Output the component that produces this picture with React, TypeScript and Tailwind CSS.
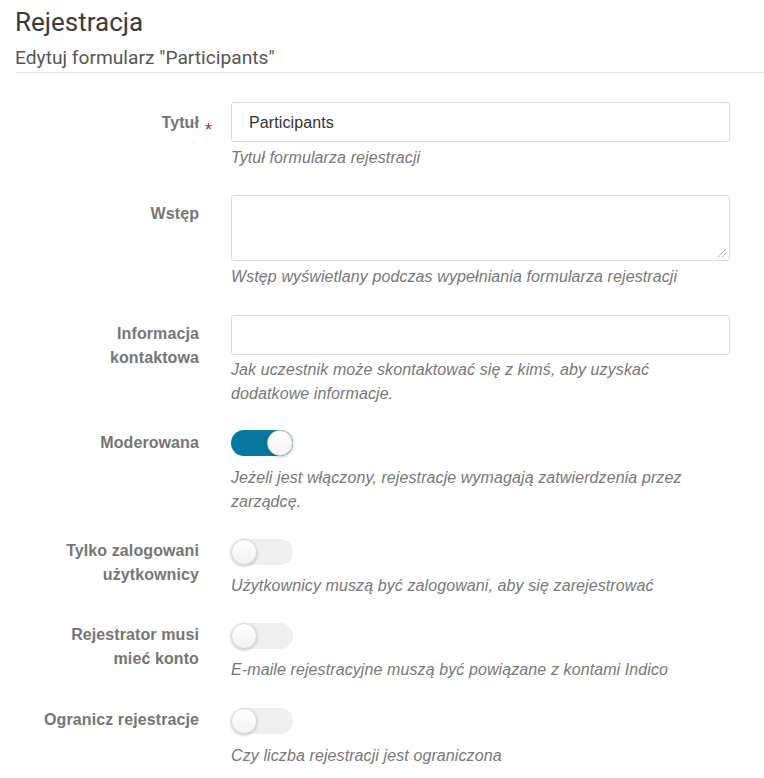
import React from "react";

const sans = { fontFamily: '"Liberation Sans", Arial, sans-serif' };

function Toggle({ on }: { on: boolean }) {
  return (
    <div
      className={
        "relative h-[26px] w-[62px] rounded-full " +
        (on ? "bg-[#07789f]" : "bg-[#efefef]")
      }
    >
      <div
        className={
          "absolute top-0 h-[26px] w-[26px] rounded-full border border-[#d6d6d6] bg-gradient-to-b from-white to-[#f2f2f2] shadow-[0_1px_3px_rgba(0,0,0,0.25)] " +
          (on ? "right-0" : "left-0")
        }
      />
    </div>
  );
}

function Label({ children, pt, star }: { children: React.ReactNode; pt: string; star?: boolean }) {
  return (
    <div className={"w-[199px] shrink-0 text-right text-[16px] font-bold leading-[24px] tracking-[0.1px] text-[#757575] " + pt}>
      <span className="relative">
        {children}
        {star && (
          <span className="absolute left-[calc(100%+6px)] top-[4px] text-[18px] font-normal text-[#b0262b]">*</span>
        )}
      </span>
    </div>
  );
}

function Help({ children, mt }: { children: React.ReactNode; mt: string }) {
  return <div className={"text-[16px] italic leading-[24px] tracking-[0.1px] text-[#777] " + mt}>{children}</div>;
}

export default function App() {
  return (
    <div className="min-h-[778px] bg-white" style={sans}>
      <div className="ml-[15px] border-b border-[#e5e5e5] pb-[2px]">
        <h1
          className="pt-[7px] text-[26px] leading-[30px] text-[#3a3a3a]"
          style={{ fontFamily: 'Roboto, "Liberation Sans", sans-serif' }}
        >
          Rejestracja
        </h1>
        <h2
          className="mt-[9px] text-[19.2px] leading-[24px] text-[#555]"
          style={{ fontFamily: 'Roboto, "Liberation Sans", sans-serif' }}
        >
          Edytuj formularz "Participants"
        </h2>
      </div>

      <div className="pr-[34px] pt-[29px]">
        {/* Tytuł */}
        <div className="flex gap-[32px]">
          <Label pt="pt-[9px]" star>
            Tytuł
          </Label>
          <div className="flex-1">
            <div className="flex h-[40px] items-center rounded-[3px] border border-[#dcdcdc] pl-[17px] pt-[2px] text-[16px] tracking-[0.1px] text-[#333]">
              Participants
            </div>
            <Help mt="mt-[4px]">Tytuł formularza rejestracji</Help>
          </div>
        </div>

        {/* Wstęp */}
        <div className="mt-[25px] flex gap-[32px]">
          <Label pt="pt-[7px]">Wstęp</Label>
          <div className="flex-1">
            <div className="relative h-[66px] rounded-[3px] border border-[#dcdcdc]">
              <svg className="absolute bottom-[2px] right-[2px]" width="10" height="10" viewBox="0 0 10 10">
                <path d="M9 1 L1 9 M9 5 L5 9" stroke="#666" strokeWidth="1" strokeDasharray="1 1" fill="none" />
              </svg>
            </div>
            <Help mt="mt-[4px]">Wstęp wyświetlany podczas wypełniania formularza rejestracji</Help>
          </div>
        </div>

        {/* Informacja kontaktowa */}
        <div className="mt-[26px] flex gap-[32px]">
          <Label pt="pt-[7px]">
            Informacja
            <br />
            kontaktowa
          </Label>
          <div className="flex-1">
            <div className="h-[40px] rounded-[3px] border border-[#dcdcdc]" />
            <Help mt="mt-[3px]">
              Jak uczestnik może skontaktować się z kimś, aby uzyskać
              <br />
              dodatkowe informacje.
            </Help>
          </div>
        </div>

        {/* Moderowana */}
        <div className="mt-[24px] flex gap-[32px]">
          <Label pt="pt-[1px]">Moderowana</Label>
          <div className="flex-1 pt-[0px]">
            <Toggle on />
            <Help mt="mt-[10px]">
              Jeżeli jest włączony, rejestracje wymagają zatwierdzenia przez zarządcę.
            </Help>
          </div>
        </div>

        {/* Tylko zalogowani */}
        <div className="mt-[24px] flex gap-[32px]">
          <Label pt="pt-[1px]">
            Tylko zalogowani
            <br />
            użytkownicy
          </Label>
          <div className="flex-1 pt-[1px]">
            <Toggle on={false} />
            <Help mt="mt-[9px]">Użytkownicy muszą być zalogowani, aby się zarejestrować</Help>
          </div>
        </div>

        {/* Rejestrator */}
        <div className="mt-[24px] flex gap-[32px]">
          <Label pt="pt-[1px]">
            Rejestrator musi
            <br />
            mieć konto
          </Label>
          <div className="flex-1 pt-[1px]">
            <Toggle on={false} />
            <Help mt="mt-[9px]">E-maile rejestracyjne muszą być powiązane z kontami Indico</Help>
          </div>
        </div>

        {/* Ogranicz */}
        <div className="mt-[25px] flex gap-[32px]">
          <Label pt="pt-[1px]">Ogranicz rejestracje</Label>
          <div className="flex-1 pt-[1px]">
            <Toggle on={false} />
            <Help mt="mt-[10px]">Czy liczba rejestracji jest ograniczona</Help>
          </div>
        </div>
      </div>
    </div>
  );
}
